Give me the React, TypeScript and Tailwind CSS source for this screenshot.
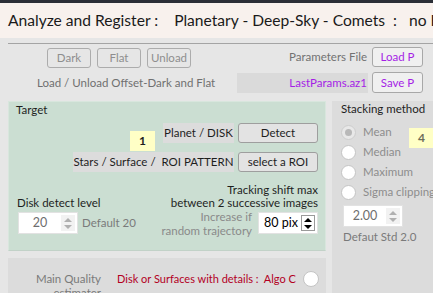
import React from "react";

const font = { fontFamily: "Lato, 'Open Sans', sans-serif" };

function Spin({ value, w, dark, align = "center" }: { value: string; w: string; dark?: boolean; align?: string }) {
  return (
    <div className={`flex h-[22px] bg-white ${w} items-stretch border border-[#e2e2e2]`}>
      <div className={`flex-1 flex items-center ${align === "left" ? "justify-start pl-[5px]" : "justify-center"} text-[12.5px] whitespace-nowrap ${dark ? "text-black" : "text-[#6e6e6e]"}`}>
        {value}
      </div>
      <div className={`w-[14px] my-[2px] mr-[2px] flex flex-col items-center justify-center gap-[3px] ${dark ? "border border-[#9a9a9a] bg-white" : "bg-[#f2f2f2]"}`}>
        <div className={`w-0 h-0 border-x-[4px] border-x-transparent border-b-[4px] ${dark ? "border-b-black" : "border-b-[#b0b0b0]"}`} />
        <div className={`w-0 h-0 border-x-[4px] border-x-transparent border-t-[4px] ${dark ? "border-t-black" : "border-t-[#b0b0b0]"}`} />
      </div>
    </div>
  );
}

function Radio({ label, disabled }: { label: string; disabled?: boolean }) {
  return (
    <div className="flex items-center h-[20px] whitespace-nowrap">
      <div className={`w-[15px] h-[15px] shrink-0 rounded-full border flex items-center justify-center ${disabled ? "bg-[#e8e8e8] border-[#cdcdcd]" : "bg-white border-[#c4c4c4]"}`}>
        {disabled && <div className="w-[7px] h-[7px] rounded-full bg-[#b8b8b8]" />}
      </div>
      <span className="ml-[7px] text-[11.5px] text-[#8d8d8d]">{label}</span>
    </div>
  );
}

export default function App() {
  return (
    <div className="w-[433px] h-[293px] overflow-hidden bg-[#e6e6e6] text-[#1e1e1e]" style={font}>
      <div className="h-[3px] bg-[#2b2e36]" />
      <div className="h-[35px] bg-[#f8f1ed] flex items-center pl-[8px] text-[15.6px] whitespace-nowrap overflow-hidden text-[#1a1a1a]">
        <span>Analyze and Register :</span>
        <span className="ml-[16px]">Planetary - Deep-Sky - Comets&nbsp; :&nbsp;&nbsp; no Files</span>
      </div>
      <div className="ml-[8px] mt-[5px] h-px bg-[#a4a4a4]" />

      {/* load / params row */}
      <div className="flex h-[57px] whitespace-nowrap">
        <div className="w-[230px] pt-[4px]">
          <div className="flex gap-[6px] ml-[47px]">
            {["Dark", "Flat", "Unload"].map((b) => (
              <div key={b} className="w-[44px] h-[20px] rounded-[3px] border border-[#acacac] flex items-center justify-center text-[11.5px] text-[#8e8e8e]">
                {b}
              </div>
            ))}
          </div>
          <div className="ml-[37px] mt-[6px] text-[11.5px] text-[#707070]">Load / Unload Offset-Dark and Flat</div>
        </div>
        <div className="flex-1 pt-[3px] pl-[8px]">
          <div className="flex items-center justify-end h-[20px]">
            <span className="text-[11.5px] text-[#727272] mr-[5px]">Parameters File</span>
            <div className="w-[51px] h-[20px] rounded-[3px] border border-[#a8a8a8] bg-[#f0f0f0] flex items-center justify-center text-[11.5px] text-[#a51ee6] mr-[10px]">Load P</div>
          </div>
          <div className="flex items-center justify-end h-[21px] mt-[5px]">
            <div className="w-[131px] h-[20px] bg-[#dadada] flex items-center justify-end pr-[1px] text-[11.5px] text-[#a51ee6] mr-[4px]">LastParams.az1</div>
            <div className="w-[51px] h-[21px] rounded-[3px] border border-[#a8a8a8] bg-[#f0f0f0] flex items-center justify-center text-[11.5px] text-[#a51ee6] mr-[10px]">Save P</div>
          </div>
        </div>
      </div>

      <div className="flex whitespace-nowrap">
        {/* left column */}
        <div className="ml-[8px] w-[318px] shrink-0">
          <div className="h-[150px] bg-[#cbded2] border border-[#d8e6dd] border-b-[#c2d2c8] pr-[7px]">
            <div className="pl-[7px] pt-[1px] text-[11.5px] leading-[14px] text-[#1e1e1e]">Target</div>
            <div className="mt-[6px] flex justify-end items-start h-[29px]">
              <div className="mt-[8px] w-[25px] h-[20px] bg-[#ffffc6] flex items-center justify-center text-[12px] font-bold mr-[8px]">1</div>
              <div className="w-[71px] h-[20px] bg-[#dcdcdc] flex items-center justify-center text-[11.5px]">Planet / DISK</div>
              <div className="ml-[4px] w-[80px] h-[20px] rounded-[3px] border border-[#9e9e9e] bg-[#e3e3e3] flex items-center justify-center text-[11.5px]">Detect</div>
            </div>
            <div className="flex justify-end items-start">
              <div className="w-[161px] h-[20px] bg-[#dcdcdc] flex items-center justify-center text-[11.5px]">Stars / Surface /&nbsp; ROI PATTERN</div>
              <div className="ml-[4px] w-[80px] h-[20px] rounded-[3px] border border-[#9e9e9e] bg-[#e3e3e3] flex items-center justify-center text-[11.5px]">select a ROI</div>
            </div>
            <div className="mt-[11px] text-right text-[11.5px] leading-[13px]">Tracking shift max</div>
            <div className="flex justify-between text-[11.5px] leading-[13px]">
              <span className="pl-[8px]">Disk detect level</span>
              <span>between 2 successive images</span>
            </div>
            <div className="flex justify-between items-start mt-[2px]">
              <div className="flex items-center pl-[9px] mt-[1px]">
                <Spin value="20" w="w-[60px]" />
                <span className="ml-[4px] text-[11.5px] text-[#7a7a7a]">Default 20</span>
              </div>
              <div className="flex items-start">
                <div className="text-right text-[11.5px] leading-[14px] text-[#8a8a8a] mt-[-1px]">
                  <div>Increase if</div>
                  <div>random trajectory</div>
                </div>
                <div className="ml-[6px] mt-[1px]">
                  <Spin value="80 pix" w="w-[60px]" dark align="left" />
                </div>
              </div>
            </div>
          </div>
          <div className="mt-[7px] h-[40px] bg-[#dcdcdc] flex items-start pt-[14px]">
            <div className="w-[93px] text-right text-[11.5px] leading-[14px] text-[#7a7a7a]">
              <div>Main Quality</div>
              <div>estimater</div>
            </div>
            <span className="ml-[16px] text-[11px] leading-[14px] text-[#b3001f]">Disk or Surfaces with details :&nbsp; Algo C</span>
            <div className="ml-[7px] mt-[-1px] w-[16px] h-[16px] rounded-full bg-white border border-[#c4c4c4]" />
          </div>
        </div>

        {/* right column */}
        <div className="ml-[6px] flex-1 h-[192px] bg-[#dcdcdc] pl-[9px]">
          <div className="pt-[1px] text-[11.5px] leading-[14px]">Stacking method</div>
          <div className="mt-[6px] flex items-start">
            <div className="w-[68px] shrink-0">
              <Radio label="Mean" disabled />
              <Radio label="Median" />
              <Radio label="Maximum" />
              <Radio label="Sigma clipping" />
            </div>
            <div className="mt-[6px] w-[30px] h-[20px] bg-[#ffffc6] flex items-center pl-[9px] text-[12px] font-bold text-[#6e6e5a] shrink-0">4</div>
          </div>
          <div className="mt-[3px] ml-[2px]">
            <Spin value="2.00" w="w-[60px]" />
          </div>
          <div className="ml-[2px] mt-[3px] text-[11.5px] leading-[14px] text-[#7a7a7a]">Defaut Std 2.0</div>
          <div className="flex justify-end pr-[4px] mt-[1px]">
            <div className="w-px h-[60px] bg-[#5a5a5a]" />
          </div>
        </div>
      </div>
    </div>
  );
}
